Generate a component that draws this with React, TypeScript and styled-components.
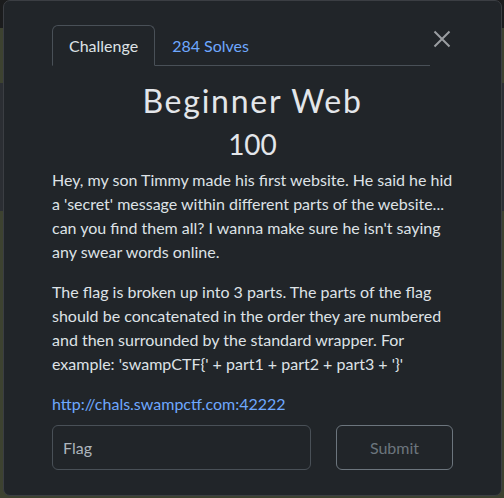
import React from "react";
import styled, { createGlobalStyle } from "styled-components";

const Global = createGlobalStyle`
  html, body { margin: 0; padding: 0; }
  body {
    width: 504px;
    height: 498px;
    overflow: hidden;
    font-family: Lato, "Noto Sans", sans-serif;
    background: linear-gradient(
      to bottom,
      #1b1c1d 0px, #1b1c1d 28px,
      #3d4230 28px, #3d4230 83px,
      #2b2e33 83px, #2b2e33 211px,
      #3d4230 211px
    );
  }
`;

const Modal = styled.div`
  box-sizing: border-box;
  margin-left: 3px;
  width: 499px;
  height: 496px;
  background: #212529;
  border: 1px solid #3b3e43;
  border-radius: 7px;
  padding: 24px 48px 0 48px;
  color: #dee2e6;
`;

const Header = styled.div`
  display: flex;
  align-items: flex-start;
`;

const Tabs = styled.div`
  display: flex;
  width: 378px;
  border-bottom: 1px solid #495057;
`;

const Tab = styled.div<{ $active?: boolean }>`
  box-sizing: border-box;
  height: 41px;
  padding: 0 16px;
  display: flex;
  align-items: center;
  font-size: 16px;
  margin-bottom: -1px;
  border: 1px solid ${(p) => (p.$active ? "#495057" : "transparent")};
  border-bottom-color: ${(p) => (p.$active ? "#212529" : "transparent")};
  border-radius: 6px 6px 0 0;
  color: ${(p) => (p.$active ? "#dee2e6" : "#6ea8fe")};
  background: ${(p) => (p.$active ? "#212529" : "transparent")};
`;

const Close = styled.button`
  flex: 1;
  height: 26px;
  margin-top: 1px;
  padding: 0;
  border: 0;
  background: transparent;
  display: flex;
  justify-content: center;
  align-items: center;
`;

const Title = styled.h1`
  margin: 16px 0 0;
  text-align: center;
  font-weight: 400;
  font-size: 32px;
  line-height: 1.2;
  letter-spacing: 1.75px;
  color: #e3e6ea;
`;

const Points = styled.div`
  margin-top: 8px;
  text-align: center;
  font-size: 28px;
  line-height: 1.2;
  color: #e3e6ea;
`;

const Desc = styled.div`
  margin-top: 6px;
  font-size: 16px;
  line-height: 24px;
  color: #dee2e6;
  p { margin: 0 0 16px; }
`;

const Link = styled.a`
  display: block;
  margin-top: 6px;
  font-size: 16px;
  line-height: 24px;
  color: #6ea8fe;
  text-decoration: none;
`;

const FormRow = styled.div`
  display: flex;
  gap: 25px;
  margin-top: 9px;
`;

const Input = styled.div`
  box-sizing: border-box;
  width: 259px;
  height: 45px;
  border: 1px solid #495057;
  border-radius: 6px;
  padding: 0 10px;
  display: flex;
  align-items: center;
  font-size: 16px;
  color: #adb5bd;
`;

const Submit = styled.div`
  box-sizing: border-box;
  width: 117px;
  height: 45px;
  border: 1px solid #6c757d;
  border-radius: 6px;
  display: flex;
  align-items: center;
  justify-content: center;
  font-size: 16px;
  color: #6c757d;
`;

export default function App() {
  return (
    <>
      <Global />
      <Modal>
        <Header>
          <Tabs>
            <Tab $active>Challenge</Tab>
            <Tab>284 Solves</Tab>
          </Tabs>
          <Close aria-label="Close">
            <svg width="18" height="18" viewBox="0 0 18 18">
              <path d="M1.5 1.5 L16.5 16.5 M16.5 1.5 L1.5 16.5" stroke="#9a9da1" strokeWidth="2" />
            </svg>
          </Close>
        </Header>
        <Title>Beginner Web</Title>
        <Points>100</Points>
        <Desc>
          <p>
            Hey, my son Timmy made his first website. He said he hid a 'secret' message within
            different parts of the website... can you find them all? I wanna make sure he isn't
            saying any swear words online.
          </p>
          <p>
            {"The flag is broken up into 3 parts. The parts of the flag should be concatenated in the order they are numbered and then surrounded by the standard wrapper. For example: 'swampCTF{' + part1 + part2 + part3 + '}'"}
          </p>
        </Desc>
        <Link href="#">http://chals.swampctf.com:42222</Link>
        <FormRow>
          <Input>Flag</Input>
          <Submit>Submit</Submit>
        </FormRow>
      </Modal>
    </>
  );
}
